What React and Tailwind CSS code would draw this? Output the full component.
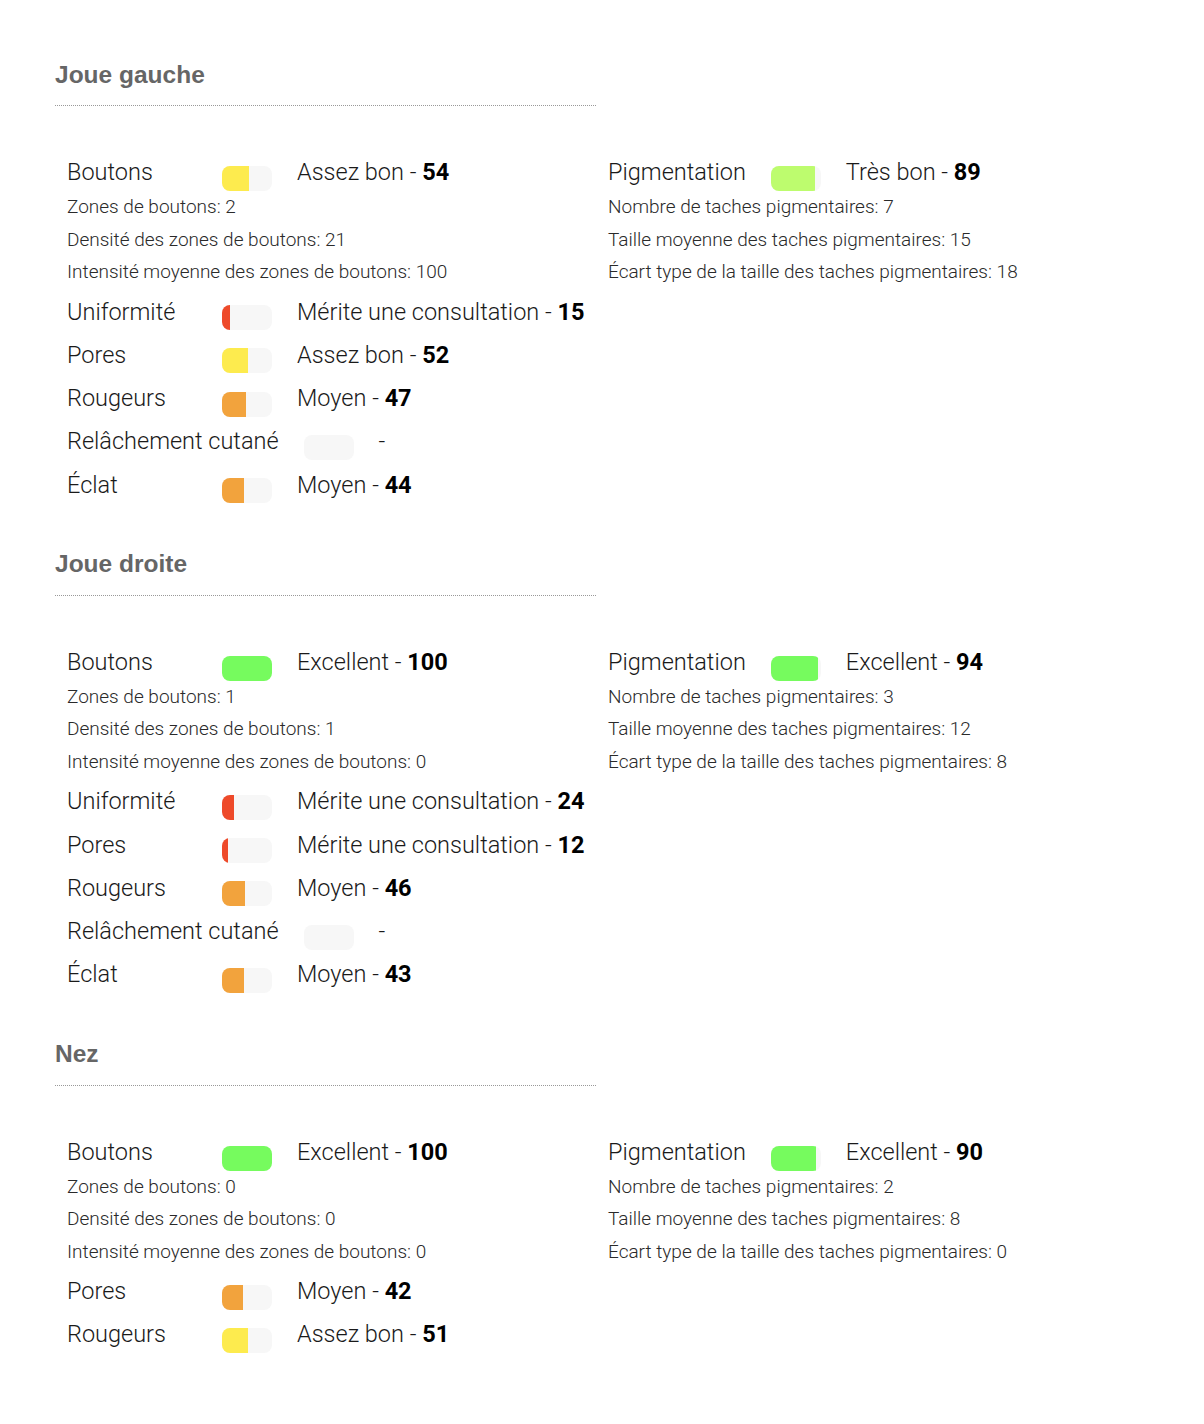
const sections = [
  {
    title: "Joue gauche",
    boutons: { score: 54, label: "Assez bon", color: "bg-[#fdeb4e]", details: ["Zones de boutons: 2", "Densité des zones de boutons: 21", "Intensité moyenne des zones de boutons: 100"] },
    pigmentation: { score: 89, label: "Très bon", color: "bg-[#bdfc6e]", details: ["Nombre de taches pigmentaires: 7", "Taille moyenne des taches pigmentaires: 15", "Écart type de la taille des taches pigmentaires: 18"] },
    rows: [
      { name: "Uniformité", score: 15, label: "Mérite une consultation", color: "bg-[#ee4a2a]" },
      { name: "Pores", score: 52, label: "Assez bon", color: "bg-[#fdeb4e]" },
      { name: "Rougeurs", score: 47, label: "Moyen", color: "bg-[#f2a33d]" },
      { name: "Relâchement cutané", score: null },
      { name: "Éclat", score: 44, label: "Moyen", color: "bg-[#f2a33d]" },
    ],
  },
  {
    title: "Joue droite",
    boutons: { score: 100, label: "Excellent", color: "bg-[#76fb5e]", details: ["Zones de boutons: 1", "Densité des zones de boutons: 1", "Intensité moyenne des zones de boutons: 0"] },
    pigmentation: { score: 94, label: "Excellent", color: "bg-[#76fb5e]", details: ["Nombre de taches pigmentaires: 3", "Taille moyenne des taches pigmentaires: 12", "Écart type de la taille des taches pigmentaires: 8"] },
    rows: [
      { name: "Uniformité", score: 24, label: "Mérite une consultation", color: "bg-[#ee4a2a]" },
      { name: "Pores", score: 12, label: "Mérite une consultation", color: "bg-[#ee4a2a]" },
      { name: "Rougeurs", score: 46, label: "Moyen", color: "bg-[#f2a33d]" },
      { name: "Relâchement cutané", score: null },
      { name: "Éclat", score: 43, label: "Moyen", color: "bg-[#f2a33d]" },
    ],
  },
  {
    title: "Nez",
    boutons: { score: 100, label: "Excellent", color: "bg-[#76fb5e]", details: ["Zones de boutons: 0", "Densité des zones de boutons: 0", "Intensité moyenne des zones de boutons: 0"] },
    pigmentation: { score: 90, label: "Excellent", color: "bg-[#76fb5e]", details: ["Nombre de taches pigmentaires: 2", "Taille moyenne des taches pigmentaires: 8", "Écart type de la taille des taches pigmentaires: 0"] },
    rows: [
      { name: "Pores", score: 42, label: "Moyen", color: "bg-[#f2a33d]" },
      { name: "Rougeurs", score: 51, label: "Assez bon", color: "bg-[#fdeb4e]" },
    ],
  },
];

// small pill showing the score
function ScoreBar({ score, color }) {
  return (
    <div className="w-[50px] h-[25px] rounded-[8px] bg-[#f7f7f7] overflow-hidden shrink-0 mt-[11px]">
      {score !== null && (
        <div className={`h-full ${color}`} style={{ width: `${score}%` }}></div>
      )}
    </div>
  );
}

function MetricRow({ name, score, label, color, height = "h-[43.25px]" }) {
  return (
    <div className={`flex items-center ${height}`}>
      <span className="min-w-[130px] mr-[25px] text-[23.5px] text-[#1a1a1a] whitespace-nowrap">
        {name}
      </span>
      <ScoreBar score={score} color={color} />
      <span className="ml-[25px] text-[23.5px] text-[#1a1a1a] whitespace-nowrap">
        {score === null ? (
          "-"
        ) : (
          <>
            {label} - <span className="font-bold text-black">{score}</span>
          </>
        )}
      </span>
    </div>
  );
}

function Details({ lines }) {
  return (
    <div className="pb-[2px]">
      {lines.map((line) => (
        <div key={line} className="h-[32.5px] flex items-center text-[19px] text-[#2a2a2a]">
          {line}
        </div>
      ))}
    </div>
  );
}

export default function App() {
  return (
    <div
      className="bg-white min-h-screen px-[55px] pt-[59px] font-light"
      style={{ fontFamily: "Roboto, 'Liberation Sans', sans-serif" }}
    >
      {sections.map((section) => (
        <section key={section.title} className="pb-[42px]">
          <h2
            className="h-[32px] flex items-center text-[24.5px] font-bold text-[#666]"
            style={{ fontFamily: "'Liberation Sans', Arial, sans-serif" }}
          >
            {section.title}
          </h2>
          <div className="w-[541px] mt-[14px] border-t border-dotted border-[#999]"></div>

          <div className="grid grid-cols-[541px_541px] mt-[49px]">
            {/* left column */}
            <div className="pl-[12px]">
              <MetricRow name="Boutons" {...section.boutons} height="h-[36px]" />
              <Details lines={section.boutons.details} />
              {section.rows.map((row) => (
                <MetricRow key={row.name} {...row} />
              ))}
            </div>

            {/* right column */}
            <div className="pl-[12px]">
              <MetricRow name="Pigmentation" {...section.pigmentation} height="h-[36px]" />
              <Details lines={section.pigmentation.details} />
            </div>
          </div>
        </section>
      ))}
    </div>
  );
}
